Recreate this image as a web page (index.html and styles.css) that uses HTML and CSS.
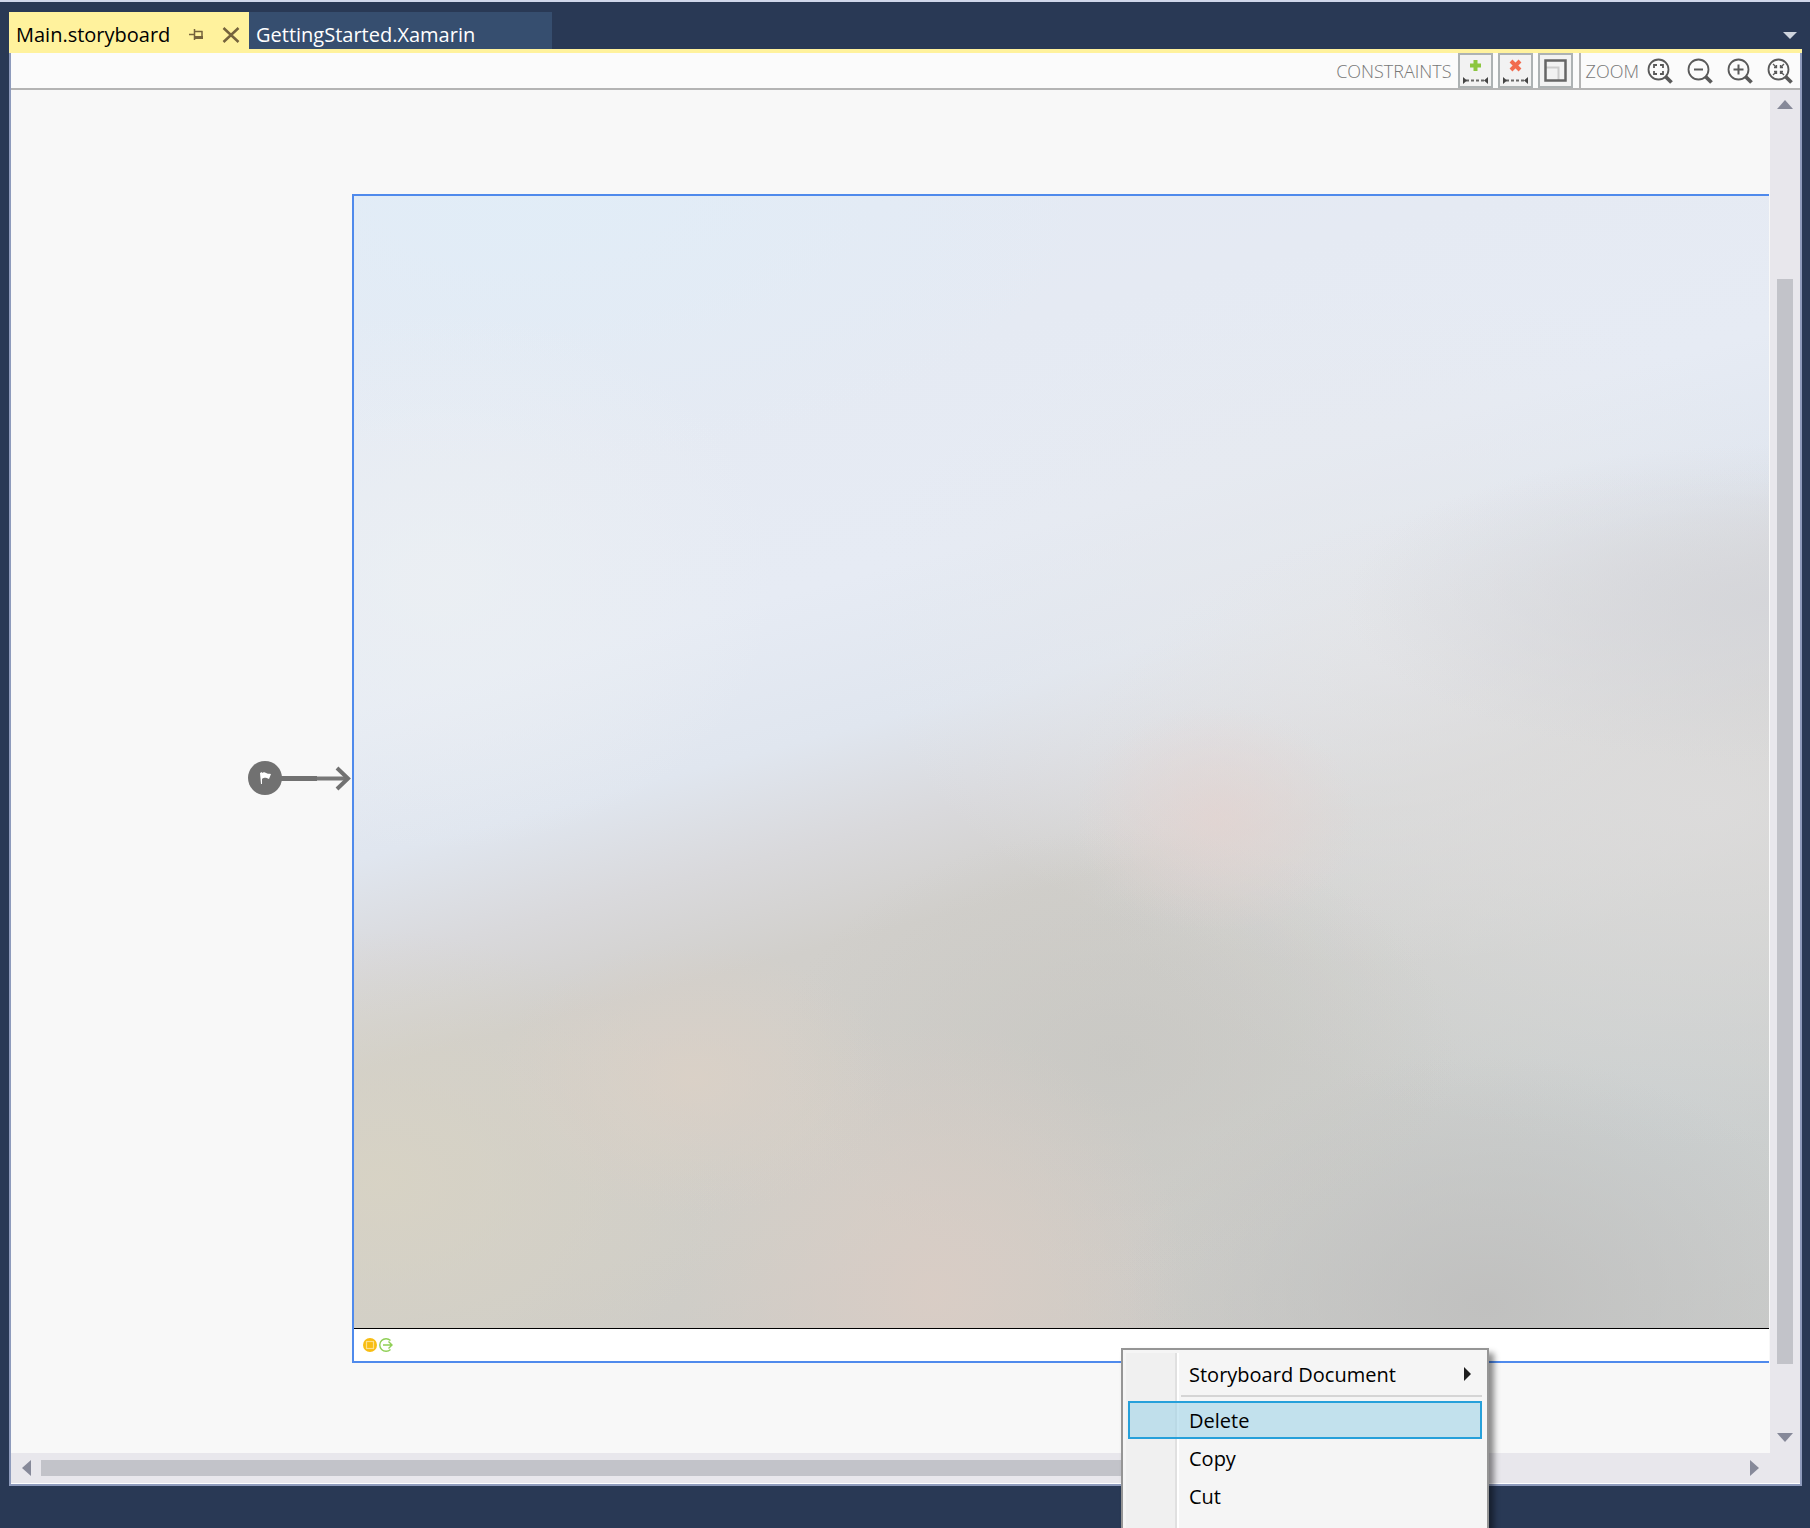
FILE: index.html
```
<!DOCTYPE html>
<html lang="en">
<head>
    <meta charset="UTF-8">
    <meta name="viewport" content="width=device-width, initial-scale=1.0">
    <title>Main.storyboard</title>
    <link rel="stylesheet" href="styles.css">
</head>
<body>
    <div class="tabs">
        <div class="tab active">
            <a href="#">Main.storyboard</a>
            <button type="button" class="tab-button" aria-label="Pin tab">
                <svg width="14" height="14" viewBox="0 0 14 14"><path d="M0 6.500h5M5.500 1v11M6 3.500h7.500M13 3v7" fill="none" stroke="#75633d" stroke-width="1.500"/><path d="M5 8h9v3H5z" fill="#75633d"/></svg>
            </button>
            <button type="button" class="tab-button" aria-label="Close tab">
                <svg width="18" height="16" viewBox="0 0 18 16"><path d="M1.500 1l15 14M16.500 1l-15 14" stroke="#75633d" stroke-width="2.500"/></svg>
            </button>
        </div>
        <div class="tab">
            <a href="#">GettingStarted.Xamarin</a>
        </div>
        <button type="button" class="tab-list" aria-label="Open documents">
            <svg width="14" height="7" viewBox="0 0 14 7"><path d="M0 0h14L7 7z" fill="#ced4dd"/></svg>
        </button>
    </div>

    <main class="designer">
        <div class="toolbar">
            <span class="toolbar-label">CONSTRAINTS</span>
            <div class="constraints">
                <button type="button" class="tool" aria-label="Add constraints">
                    <svg width="31" height="31" viewBox="0 0 31 31"><path d="M15.500 5v11M10 10.500h11" stroke="#8cc63f" stroke-width="4"/><path d="M6 25.500h19" stroke="#666" stroke-width="2" stroke-dasharray="3 2"/><path d="M3 22v7l4-3.500zM28 22v7l-4-3.500z" fill="#444"/></svg>
                </button>
                <button type="button" class="tool" aria-label="Remove constraints">
                    <svg width="31" height="31" viewBox="0 0 31 31"><path d="M11 6l9 9M20 6l-9 9" stroke="#f26c4f" stroke-width="4"/><path d="M6 25.500h19" stroke="#666" stroke-width="2" stroke-dasharray="3 2"/><path d="M3 22v7l4-3.500zM28 22v7l-4-3.500z" fill="#444"/></svg>
                </button>
                <button type="button" class="tool" aria-label="Frame mode">
                    <svg width="31" height="31" viewBox="0 0 31 31" fill="none"><path d="M6 12.500h12.500V25" stroke="#ccc" stroke-width="2"/><rect x="5.500" y="5.500" width="20" height="20" stroke="#666" stroke-width="2.500"/></svg>
                </button>
            </div>
            <span class="toolbar-label zoom-label">ZOOM</span>
            <div class="zoom">
                <button type="button" aria-label="Zoom to fit">
                    <svg width="26" height="26" viewBox="0 0 26 26" fill="none" stroke="#5a5a5a"><circle cx="11.500" cy="11.500" r="10" stroke-width="1.800"/><path d="M18.500 18.500l6 6" stroke-width="3.800"/><path d="M7 10V7h3M13 7h3v3M16 13v3h-3M10 16H7v-3" stroke-width="1.800"/></svg>
                </button>
                <button type="button" aria-label="Zoom out">
                    <svg width="26" height="26" viewBox="0 0 26 26" fill="none" stroke="#5a5a5a"><circle cx="11.500" cy="11.500" r="10" stroke-width="1.800"/><path d="M18.500 18.500l6 6" stroke-width="3.800"/><path d="M7 11.500h9" stroke-width="2"/></svg>
                </button>
                <button type="button" aria-label="Zoom in">
                    <svg width="26" height="26" viewBox="0 0 26 26" fill="none" stroke="#5a5a5a"><circle cx="11.500" cy="11.500" r="10" stroke-width="1.800"/><path d="M18.500 18.500l6 6" stroke-width="3.800"/><path d="M6.500 11.500h10M11.500 6.500v10" stroke-width="2"/></svg>
                </button>
                <button type="button" aria-label="Actual size">
                    <svg width="26" height="26" viewBox="0 0 26 26" fill="none" stroke="#5a5a5a"><circle cx="11.500" cy="11.500" r="10" stroke-width="1.800"/><path d="M18.500 18.500l6 6" stroke-width="3.800"/><path d="M6 6l3 3M17 6l-3 3M6 17l3-3M17 17l-3-3M9.500 7v2.500H7M13.500 7v2.500H16M9.500 16v-2.500H7M13.500 16v-2.500H16" stroke-width="1.300"/></svg>
                </button>
            </div>
        </div>

        <div class="workspace">
            <div class="canvas">
                <div class="entry">
                    <svg width="104" height="36" viewBox="0 0 104 36"><circle cx="17" cy="17" r="17" fill="#717171"/><path d="M12 12l2-1v12h-1zM14 12c3-2 3 1 9 1l-2 5c-3-1-4-2-7 0z" fill="#fff"/><path d="M33 17.500h36" stroke="#717171" stroke-width="5"/><path d="M69 17.500h30" stroke="#777" stroke-width="4"/><path d="M89 7l11 10.500L89 28" fill="none" stroke="#717171" stroke-width="4"/></svg>
                </div>
                <section class="scene">
                    <div class="view"></div>
                    <div class="dock">
                        <svg width="30" height="14" viewBox="0 0 30 14" fill="none"><circle cx="7" cy="7" r="7" fill="#f8bd12"/><rect x="3.500" y="3.500" width="7" height="7" stroke="#fde08a" stroke-width="1.200"/><path d="M27.500 2.500A6.300 6.300 0 1 0 27.500 11.500M20 7h9M25.500 3.500L29 7l-3.500 3.500" stroke="#8fcf55" stroke-width="1.400"/></svg>
                    </div>
                </section>
            </div>
            <div class="scroll vertical">
                <svg width="16" height="9" viewBox="0 0 16 9"><path d="M8 0l8 9H0z" fill="#868999"/></svg>
                <div class="track"><div class="thumb"></div></div>
                <svg width="16" height="9" viewBox="0 0 16 9"><path d="M0 0h16L8 9z" fill="#868999"/></svg>
            </div>
            <div class="scroll horizontal">
                <svg width="9" height="16" viewBox="0 0 9 16"><path d="M9 0v16L0 8z" fill="#868999"/></svg>
                <div class="track"><div class="thumb"></div></div>
                <svg width="9" height="16" viewBox="0 0 9 16"><path d="M0 0l9 8-9 8z" fill="#868999"/></svg>
            </div>
        </div>
    </main>

    <div class="context-menu">
        <button type="button" class="submenu">Storyboard Document
            <svg width="7" height="14" viewBox="0 0 7 14"><path d="M0 0l7 7-7 7z" fill="#1e1e1e"/></svg>
        </button>
        <hr>
        <button type="button" class="selected">Delete</button>
        <button type="button">Copy</button>
        <button type="button">Cut</button>
    </div>
</body>
</html>
```
FILE: styles.css
```
* {
    box-sizing: border-box;
}

body {
    position: relative;
    display: flex;
    flex-direction: column;
    height: 100vh;
    margin: 0;
    padding: 10px 8px 42px 9px;
    overflow: hidden;
    border-top: 2px solid #d0d7ea;
    background-color: #293955;
    font-family: "Open Sans", "Noto Sans", sans-serif;
    font-size: 20px;
}

button {
    margin: 0;
    padding: 0;
    border: none;
    background: none;
    color: inherit;
    font: inherit;
}

svg {
    display: block;
    flex: none;
}

/* Document tabs */
.tabs {
    display: flex;
    height: 41px;
    border-bottom: 4px solid #fff29d;
}

.tab {
    display: flex;
    align-items: center;
    width: 303px;
    padding: 8px 7px 0;
    background-color: #364e6f;
}

.tab a {
    color: #fff;
    text-decoration: none;
}

.tab.active {
    width: 240px;
    padding-right: 12px;
    background-color: #fff29d;
}

.tab.active a {
    flex: 1;
    color: #000;
}

.tab-button {
    margin-left: 19px;
}

.tab-list {
    margin-left: auto;
    padding: 10px 5px 0;
}

/* Designer */
.designer {
    display: flex;
    flex: 1;
    flex-direction: column;
    min-height: 0;
    border: 2px solid #8e9bbc;
    border-top: none;
    background-color: #f8f8f8;
}

.toolbar {
    display: flex;
    align-items: center;
    justify-content: flex-end;
    height: 37px;
    padding-right: 7px;
    border-bottom: 2px solid #b4b4b4;
    background-color: #fbfbfb;
}

.toolbar-label {
    color: #777;
    font-size: 18px;
    font-weight: 300;
}

.constraints {
    display: flex;
    gap: 5px;
    margin-left: 6px;
    padding-right: 6px;
    border-right: 2px solid #b4b4b4;
}

.tool {
    width: 35px;
    height: 35px;
    border: 2px solid #adb2b3;
    background-color: #f2f2f2;
}

.zoom-label {
    margin-left: 5px;
}

.zoom {
    display: flex;
    gap: 14px;
    margin-left: 8px;
}

.workspace {
    display: grid;
    flex: 1;
    grid-template-columns: 1fr 30px;
    grid-template-rows: 1fr 31px;
    min-height: 0;
}

.canvas {
    display: flex;
    padding: 104px 1px 90px 237px;
}

.entry {
    align-self: center;
    width: 104px;
}

.scene {
    display: flex;
    flex: 1;
    flex-direction: column;
    border: 2px solid #4f8aec;
    border-right: none;
    background-color: #fff;
}

.view {
    flex: 1;
    border-bottom: 1px solid #000;
    background:
        radial-gradient(ellipse 10% 10% at 61% 55%, rgba(228, 211, 208, 0.7), transparent),
        radial-gradient(ellipse 14% 12% at 24% 78%, rgba(220, 209, 198, 0.8), transparent),
        radial-gradient(ellipse 18% 24% at 41% 97%, rgba(218, 205, 197, 0.9), transparent),
        radial-gradient(ellipse 24% 22% at 2% 87%, rgba(216, 211, 196, 0.9), transparent),
        radial-gradient(ellipse 24% 20% at 54% 76%, rgba(200, 199, 195, 0.8), transparent),
        radial-gradient(ellipse 26% 22% at 80% 98%, rgba(191, 191, 190, 0.9), transparent),
        radial-gradient(ellipse 30% 14% at 100% 36%, rgba(212, 213, 217, 0.9), transparent),
        radial-gradient(ellipse 46% 30% at 96% 54%, rgba(221, 220, 220, 0.9), transparent),
        radial-gradient(ellipse 36% 30% at 72% 38%, rgba(230, 232, 236, 0.9), transparent),
        radial-gradient(ellipse 46% 44% at 92% 82%, rgba(203, 208, 209, 0.9), transparent),
        radial-gradient(ellipse 24% 24% at 6% 34%, rgba(236, 240, 243, 0.8), transparent),
        radial-gradient(ellipse 40% 24% at 12% 0%, rgba(225, 237, 247, 0.9), transparent),
        linear-gradient(165deg, #e3eaf5 0%, #e5eaf3 20%, #e6ebf4 34%, #e0e6ef 44%, #d9d9dc 51%, #d1cfcb 58%, #d0cec8 75%, #cac8c4 100%);
}

.dock {
    display: flex;
    align-items: center;
    height: 32px;
    padding-left: 9px;
}

/* Scroll bars */
.scroll {
    display: flex;
    align-items: center;
    background-color: #e8e7ec;
}

.track {
    flex: 1;
}

.thumb {
    background-color: #c2c3c9;
}

.vertical {
    flex-direction: column;
    padding: 10px 0 11px;
}

.vertical .track {
    padding: 170px 0 69px;
}

.vertical .thumb {
    width: 16px;
    height: 100%;
}

.horizontal {
    grid-column: span 2;
    padding: 0 41px 0 11px;
    border-bottom: 1px solid #fff;
}

.horizontal .track {
    padding: 0 280px 0 10px;
}

.horizontal .thumb {
    height: 16px;
}

/* Context menu, runs past the bottom edge of the window */
.context-menu {
    position: absolute;
    top: 1346px;
    bottom: -20px;
    left: 1121px;
    width: 368px;
    padding: 5px;
    border: 2px solid #959595;
    background: linear-gradient(to right, #f0f0f0 49px, #e0e0e0 49px, #e0e0e0 51px, #fff 51px, #fff 53px, #f5f5f5 53px) 3px 3px no-repeat #f5f5f5;
    box-shadow: 5px 5px 6px rgba(0, 0, 0, 0.45);
}

.context-menu button {
    display: flex;
    align-items: center;
    justify-content: space-between;
    width: 354px;
    height: 38px;
    padding: 0 9px 0 59px;
    border: 2px solid transparent;
    color: #000;
}

.context-menu hr {
    margin: 2px 0 4px 53px;
    border: none;
    border-top: 2px solid #d5d5d5;
}

.context-menu .selected {
    border-color: #26a0da;
    background-color: rgba(160, 212, 232, 0.6);
}
```
